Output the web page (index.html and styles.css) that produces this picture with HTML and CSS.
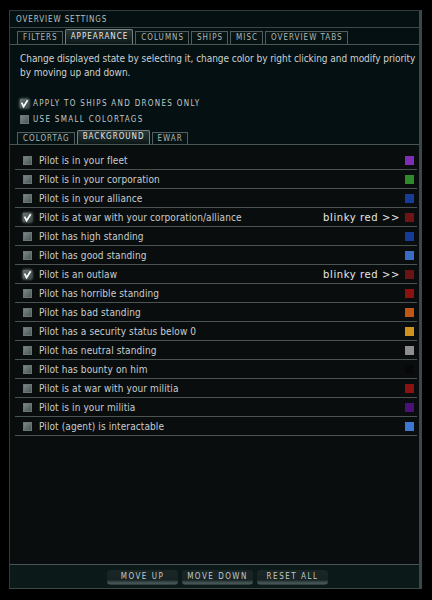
FILE: index.html
```html
<!DOCTYPE html>
<html>
<head>
<meta charset="utf-8">
<link rel="stylesheet" href="styles.css">
</head>
<body>
<div class="window">
  <div class="title">OVERVIEW SETTINGS</div>
  <div class="tabs main">
    <div class="tab">FILTERS</div>
    <div class="tab active">APPEARANCE</div>
    <div class="tab">COLUMNS</div>
    <div class="tab">SHIPS</div>
    <div class="tab">MISC</div>
    <div class="tab">OVERVIEW TABS</div>
  </div>
  <p class="desc"><span class="line">Change displayed state by selecting it, change color by right clicking and modify priority</span><span class="line">by moving up and down.</span></p>
  <div class="opts">
    <div class="opt"><span class="cb checked"><svg viewBox="0 0 9 9" width="9" height="9"><path d="M1.6 3.6 L3.6 7.6 L7.6 1.2" fill="none" stroke="#fff" stroke-width="1.7"/></svg></span>APPLY TO SHIPS AND DRONES ONLY</div>
    <div class="opt"><span class="cb"></span>USE SMALL COLORTAGS</div>
  </div>
  <div class="tabs sub">
    <div class="tab">COLORTAG</div>
    <div class="tab active">BACKGROUND</div>
    <div class="tab">EWAR</div>
  </div>
  <div class="list">
    <div class="row"><span class="cb"></span><span class="label">Pilot is in your fleet</span><span class="sw" style="background:#7e2eb4"></span></div>
    <div class="row"><span class="cb"></span><span class="label">Pilot is in your corporation</span><span class="sw" style="background:#2f8a2c"></span></div>
    <div class="row"><span class="cb"></span><span class="label">Pilot is in your alliance</span><span class="sw" style="background:#163c98"></span></div>
    <div class="row"><span class="cb checked"><svg viewBox="0 0 9 9" width="9" height="9"><path d="M1.6 3.6 L3.6 7.6 L7.6 1.2" fill="none" stroke="#fff" stroke-width="1.7"/></svg></span><span class="label">Pilot is at war with your corporation/alliance</span><span class="blink">blinky red &gt;&gt;</span><span class="sw" style="background:#6e1414"></span></div>
    <div class="row"><span class="cb"></span><span class="label">Pilot has high standing</span><span class="sw" style="background:#153a98"></span></div>
    <div class="row"><span class="cb"></span><span class="label">Pilot has good standing</span><span class="sw" style="background:#3a6cc6"></span></div>
    <div class="row"><span class="cb checked"><svg viewBox="0 0 9 9" width="9" height="9"><path d="M1.6 3.6 L3.6 7.6 L7.6 1.2" fill="none" stroke="#fff" stroke-width="1.7"/></svg></span><span class="label">Pilot is an outlaw</span><span class="blink">blinky red &gt;&gt;</span><span class="sw" style="background:#6a1414"></span></div>
    <div class="row"><span class="cb"></span><span class="label">Pilot has horrible standing</span><span class="sw" style="background:#8c1212"></span></div>
    <div class="row"><span class="cb"></span><span class="label">Pilot has bad standing</span><span class="sw" style="background:#c05614"></span></div>
    <div class="row"><span class="cb"></span><span class="label">Pilot has a security status below 0</span><span class="sw" style="background:#d0921e"></span></div>
    <div class="row"><span class="cb"></span><span class="label">Pilot has neutral standing</span><span class="sw" style="background:#8e8e8e"></span></div>
    <div class="row"><span class="cb"></span><span class="label">Pilot has bounty on him</span><span class="sw" style="background:#080808"></span></div>
    <div class="row"><span class="cb"></span><span class="label">Pilot is at war with your militia</span><span class="sw" style="background:#8a1212"></span></div>
    <div class="row"><span class="cb"></span><span class="label">Pilot is in your militia</span><span class="sw" style="background:#4a1276"></span></div>
    <div class="row"><span class="cb"></span><span class="label">Pilot (agent) is interactable</span><span class="sw" style="background:#3a76d2"></span></div>
  </div>
  <div class="footer">
    <div class="btn">MOVE UP</div>
    <div class="btn">MOVE DOWN</div>
    <div class="btn">RESET ALL</div>
  </div>
</div>
</body>
</html>
```

FILE: styles.css
```css
* { box-sizing: border-box; }
html, body { margin: 0; padding: 0; }
body {
  width: 432px;
  height: 600px;
  background: #000;
  overflow: hidden;
  font-family: "DejaVu Sans Condensed", "DejaVu Sans", sans-serif;
  color: #c9cecd;
}
.window {
  margin: 10px 0 0 9px;
  width: 413px;
  height: 579px;
  border: 1px solid #303c3c;
  border-right: 3px solid #3a4848;
  border-bottom-color: #3c4848;
  background: #041011;
  display: flex;
  flex-direction: column;
}
.title {
  height: 17px;
  padding: 1px 0 0 6px;
  line-height: 15px;
  border-bottom: 1px solid #3c4848;
  font-size: 8px;
  letter-spacing: 0.9px;
  color: #b8c0c0;
}
.tabs {
  display: flex;
  align-items: flex-end;
  gap: 2px;
  padding-left: 7px;
  border-bottom: 1px solid #4a5656;
}
.tabs.main { height: 17px; }
.tabs.sub { height: 18px; }
.tab {
  height: 13px;
  line-height: 12px;
  padding: 0 4px 0 5px;
  border: 1px solid #525e5e;
  border-bottom: none;
  background: linear-gradient(#0a1717, #051010);
  font-size: 8px;
  letter-spacing: 1px;
  color: #aeb8b8;
}
.tab.active {
  height: 15px;
  line-height: 13px;
  border-color: #75827f;
  border-radius: 2px 2px 0 0;
  background: linear-gradient(#2a3838, #0c1818);
  color: #e2e8e8;
}
.sub .tab { height: 12px; line-height: 11px; }
.sub .tab.active { height: 14px; line-height: 12px; }
.desc {
  margin: 0;
  padding: 7px 0 0 10px;
  height: 35px;
  font-size: 10px;
  line-height: 14px;
  letter-spacing: -0.05px;
  white-space: nowrap;
  color: #ccd2d2;
}
.line { display: block; }
.opts {
  margin-top: 15px;
  padding-left: 10px;
}
.opt {
  height: 16px;
  display: flex;
  align-items: center;
  gap: 4px;
  font-size: 8px;
  letter-spacing: 1.3px;
  color: #c0c8c8;
}
.cb {
  width: 9px;
  height: 9px;
  flex: none;
  background: linear-gradient(135deg, #7c8888, #4a5656);
  border: 1px solid #6a7676;
  position: relative;
}
.cb.checked {
  background: linear-gradient(135deg, #6a7676, #3a4646);
  box-shadow: 0 0 3px rgba(220, 230, 230, 0.7);
  border: none;
}
.cb svg { position: absolute; left: 0; top: 0; }
.list {
  flex: 1;
  background: #0a0d0d;
  padding: 6px 2px 0 5px;
  border-bottom: 1px solid #4a5454;
}
.row {
  height: 19px;
  display: flex;
  align-items: center;
  padding: 0 3px 0 8px;
  border-bottom: 1px solid #4a5252;
  font-size: 10px;
  letter-spacing: 0.1px;
}
.row .cb { margin-right: 7px; }
.label { flex: 1; }
.blink {
  font-family: "DejaVu Sans", sans-serif;
  font-size: 10px;
  letter-spacing: 0.6px;
  color: #e6e8e8;
  margin-right: 5px;
}
.sw {
  width: 9px;
  height: 9px;
  flex: none;
}
.footer {
  height: 23px;
  display: flex;
  gap: 4px;
  padding: 5px 0 0 97px;
  background: #0c1919;
}
.btn {
  width: 71px;
  height: 15px;
  border-radius: 4px;
  background: linear-gradient(#1b2727 0%, #172222 65%, #4a5a5a 88%, #26322f 100%);
  font-size: 8px;
  letter-spacing: 1.5px;
  line-height: 13px;
  text-align: center;
  color: #c2cbcb;
}
```
